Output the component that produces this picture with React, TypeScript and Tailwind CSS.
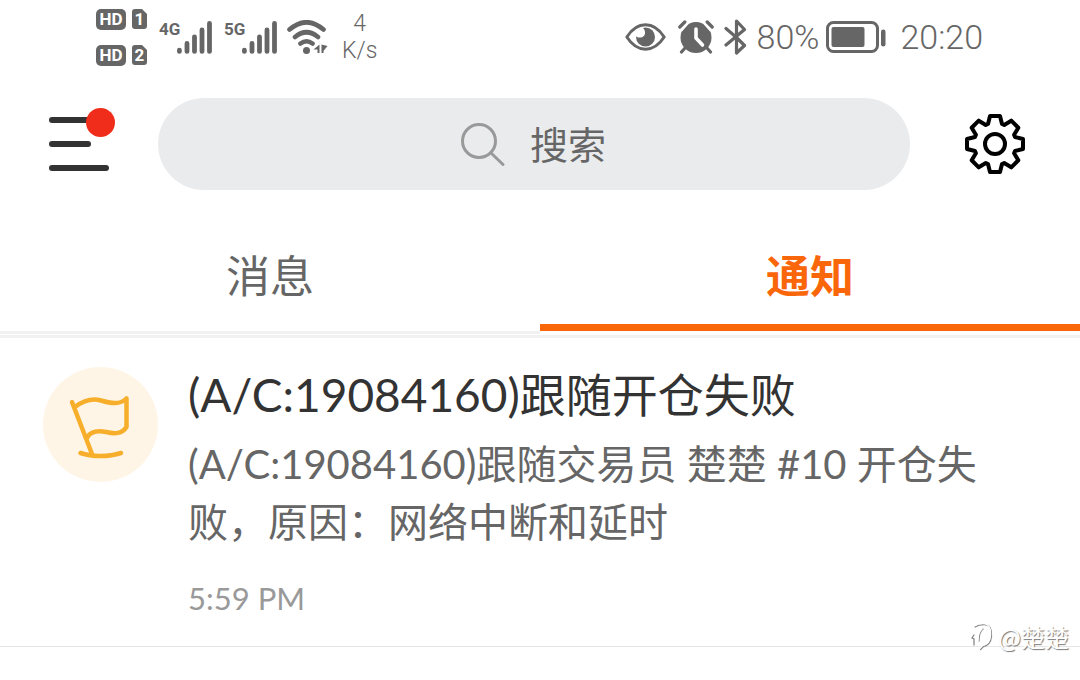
import type { ReactNode } from "react";

const gearPoints = Array.from({ length: 8 }, (_, i) => {
  const a = (i * Math.PI) / 4;
  return [
    [-7, -20],
    [-5, -28],
    [5, -28],
    [7, -20],
  ]
    .map(([x, y]) => {
      const px = x * Math.cos(a) - y * Math.sin(a);
      const py = x * Math.sin(a) + y * Math.cos(a);
      return `${px.toFixed(2)},${py.toFixed(2)}`;
    })
    .join(" ");
}).join(" ");

function SimRow({ slot }: { slot: string }) {
  return (
    <div className="flex items-center gap-[6px]">
      <span className="flex h-[21px] w-[30px] items-center justify-center rounded-[5px] bg-[#666] text-[17px] leading-none font-bold text-white">
        HD
      </span>
      <span className="relative flex h-5 w-[15px] items-center justify-center text-[17px] leading-none font-bold text-white">
        <svg className="absolute inset-0" width="15" height="20" viewBox="0 0 15 20" fill="#666" aria-hidden="true">
          <path d="M3 0h7l5 5v12a3 3 0 0 1-3 3H3a3 3 0 0 1-3-3V3a3 3 0 0 1 3-3z" />
        </svg>
        <span className="relative">{slot}</span>
      </span>
    </div>
  );
}

function Signal({ label }: { label: string }) {
  return (
    <div className="flex items-start">
      <span className="w-[18px] text-[17px] leading-4 font-bold">{label}</span>
      <svg width="35" height="33" viewBox="0 0 35 33" stroke="#666" strokeWidth="4.8" strokeLinecap="round" aria-hidden="true">
        <path d="M2.4 29.2v1.2M10 22.4v8M17.5 15.8v14.6M25 9v21.4M32.5 2.4v28" />
      </svg>
    </div>
  );
}

function StatusBar() {
  return (
    <div className="flex h-[74px] items-center justify-between pr-[97px] pl-24 font-['Roboto',sans-serif] text-[#666]">
      <div className="flex items-center">
        <div className="flex flex-col gap-[15px]">
          <SimRow slot="1" />
          <SimRow slot="2" />
        </div>
        <div className="ml-3 flex gap-3">
          <Signal label="4G" />
          <Signal label="5G" />
        </div>
        <svg className="ml-[10px]" width="41" height="34" viewBox="0 0 41 34" fill="none" stroke="#666" strokeWidth="4.6" strokeLinecap="round" aria-hidden="true">
          <path d="M2.5 9.5Q19.500-5 36.500 9.500M8 17Q19.500 7.500 31 17M13.500 23.500Q19.500 19 25.500 23.500" />
          <circle cx="19.5" cy="30.5" r="3.5" fill="#666" stroke="none" />
          <path d="M32.500 24.500v8.500h-2v-3.500h-4zM34.500 33v-8.500l6 1.500-4 5v2z" fill="#666" stroke="none" />
        </svg>
        <div className="ml-[14px] text-center text-[23px] leading-[27px] font-light">
          <div>4</div>
          <div>K/s</div>
        </div>
      </div>

      <div className="flex items-center text-[34px] leading-10 font-light">
        <svg width="41" height="28" viewBox="0 0 41 28" fill="none" stroke="#666" strokeWidth="3" strokeLinejoin="round" aria-hidden="true">
          <path d="M1.800 14C7 6 13 1.800 20.500 1.800S34 6 39.200 14C34 22 28 26.200 20.500 26.200S7 22 1.800 14z" />
          <circle cx="20.5" cy="14" r="9.5" fill="#666" stroke="none" />
          <path d="M11 8.500c-1.500 3-.5 5.500 2.500 6 4 .5 7-2 6.500-5.500-.3-2-1-3-2.500-4.500z" fill="#fff" stroke="none" />
        </svg>
        <svg className="ml-3" width="36" height="34" viewBox="0 0 36 34" aria-hidden="true">
          <circle cx="18" cy="17.5" r="15.5" fill="#666" />
          <path d="M3 11L11 2M33 11L25 2" stroke="#fff" strokeWidth="2" />
          <path d="M1.800 7l5-5M34.200 7l-5-5M7 28l-3.500 4M29 28l3.500 4" stroke="#666" strokeWidth="3.2" strokeLinecap="round" />
          <path d="M18 9v9l6.500 7" fill="none" stroke="#fff" strokeWidth="3.6" strokeLinecap="round" strokeLinejoin="round" />
        </svg>
        <svg className="ml-[10px]" width="24" height="36" viewBox="0 0 24 36" fill="none" stroke="#666" strokeWidth="3.2" strokeLinecap="round" strokeLinejoin="round" aria-hidden="true">
          <path d="M2 9.500l10.500 9 8 8-8 7.500V2l8 8.500L2 26" />
        </svg>
        <span className="ml-[9px]">80%</span>
        <svg className="ml-[7px]" width="60" height="32" viewBox="0 0 60 32" fill="#666" aria-hidden="true">
          <rect x="1.5" y="1.5" width="50" height="29" rx="6" fill="none" stroke="#666" strokeWidth="3" />
          <rect x="5.5" y="6" width="33" height="20" rx="2" />
          <rect x="55" y="8.5" width="4.5" height="17" rx="2.2" />
        </svg>
        <span className="ml-[14px]">20:20</span>
      </div>
    </div>
  );
}

function Header() {
  return (
    <header className="mt-6 flex items-center pr-[55px] pl-[49px]">
      <button type="button" aria-label="菜单" className="relative flex flex-col gap-[18px]">
        <span className="h-[6px] w-[60px] rounded-full bg-[#333]" />
        <span className="h-[6px] w-[42px] rounded-full bg-[#333]" />
        <span className="h-[6px] w-[60px] rounded-full bg-[#333]" />
        <span className="absolute -top-[9px] -right-[6px] size-[29px] rounded-full bg-[#f02d1a]" />
      </button>

      <label className="ml-[49px] flex h-[92px] flex-1 items-center justify-center gap-[25px] rounded-full bg-[#eaebed]">
        <svg width="45" height="44" viewBox="0 0 45 44" fill="none" stroke="#999" strokeWidth="3" strokeLinecap="round" aria-hidden="true">
          <circle cx="19" cy="19" r="16.5" />
          <path d="M31 31l12 11.500" />
        </svg>
        <input
          type="text"
          aria-label="搜索"
          placeholder="搜索"
          className="h-14 w-[78px] bg-transparent text-[38px] outline-none placeholder:text-[#666] placeholder:opacity-100"
        />
      </label>

      <button type="button" aria-label="设置" className="ml-[55px]">
        <svg width="60" height="60" viewBox="-30 -30 60 60" fill="none" stroke="#000" strokeWidth="4" strokeLinejoin="round" aria-hidden="true">
          <polygon points={gearPoints} />
          <circle r="10" />
        </svg>
      </button>
    </header>
  );
}

function Tab({ active, children }: { active?: boolean; children: ReactNode }) {
  return (
    <button
      type="button"
      role="tab"
      aria-selected={!!active}
      className={
        active
          ? "mb-[3px] border-b-[7px] border-[#fa660a] pt-[53px] pb-[15px] text-[44px] leading-[66px] font-bold text-[#fa660a]"
          : "border-b-[3px] border-[#f1f1f1] pt-[53px] pb-[22px] text-[44px] leading-[66px] text-[#666]"
      }
    >
      {children}
    </button>
  );
}

function FlagIcon() {
  return (
    <div className="size-[115px] shrink-0 rounded-full bg-[#fff5e6]">
      <svg width="115" height="115" viewBox="0 0 115 115" fill="none" stroke="#f7ae2b" strokeWidth="4.5" strokeLinecap="round" strokeLinejoin="round" aria-hidden="true">
        <path d="M29 35l20 52" />
        <path d="M32 40C40 34 49 31 58 33.500C68 36.500 77 38 83.500 31.500V60C79 67 72 67 63 65C55 63.500 48 64 44.500 70" />
        <path d="M37.500 86C49 90 66 90 78 86" />
      </svg>
    </div>
  );
}

export default function App() {
  return (
    <div className="min-h-screen bg-white font-['Lato','Noto_Sans_CJK_SC',sans-serif]">
      <StatusBar />
      <Header />

      <div role="tablist" className="grid grid-cols-2">
        <Tab>消息</Tab>
        <Tab active>通知</Tab>
      </div>

      <main className="mt-px border-t-[3px] border-[#f1f1f1]">
        <article className="relative flex gap-[30px] border-b border-[#e5e5e5] pt-[29px] pr-[62px] pb-7 pl-[43px]">
          <FlagIcon />
          <div className="min-w-0 flex-1">
            <h2 className="text-[46px] leading-[56px] text-[#333]">(A/C:19084160)跟随开仓失败</h2>
            <p className="mt-3 text-[40px] leading-[58px] text-[#666]">
              (A/C:19084160)跟随交易员 楚楚 #10 开仓失败，原因：网络中断和延时
            </p>
            <time className="mt-[27px] block text-[31px] leading-10 text-[#999]">5:59 PM</time>
          </div>

          <div className="absolute right-[11px] -bottom-[7px] flex items-center gap-1 text-2xl leading-8 text-white [text-shadow:1px_1px_1px_#777]">
            <svg width="23" height="28" viewBox="0 0 23 28" fill="none" strokeLinecap="round" aria-hidden="true">
              <path d="M4 4c3-2 6-2.500 9-2.500 6 0 8 5 7.500 12-.5 5-3 9-8 10l-3 3M3 12l-2 3 2 1v6M12 6c-4 3-4 8-4 12" stroke="#888" strokeWidth="1.3" />
              <path d="M3 3c3-2 6-2.500 9-2.500 6 0 8 5 7.500 12-.5 5-3 9-8 10l-3 3M11 6c-4 3-4 8-4 12" stroke="#fff" strokeWidth="1.3" />
            </svg>
            <span className="font-['Noto_Sans_CJK_SC',sans-serif]">@楚楚</span>
          </div>
        </article>
      </main>
    </div>
  );
}
